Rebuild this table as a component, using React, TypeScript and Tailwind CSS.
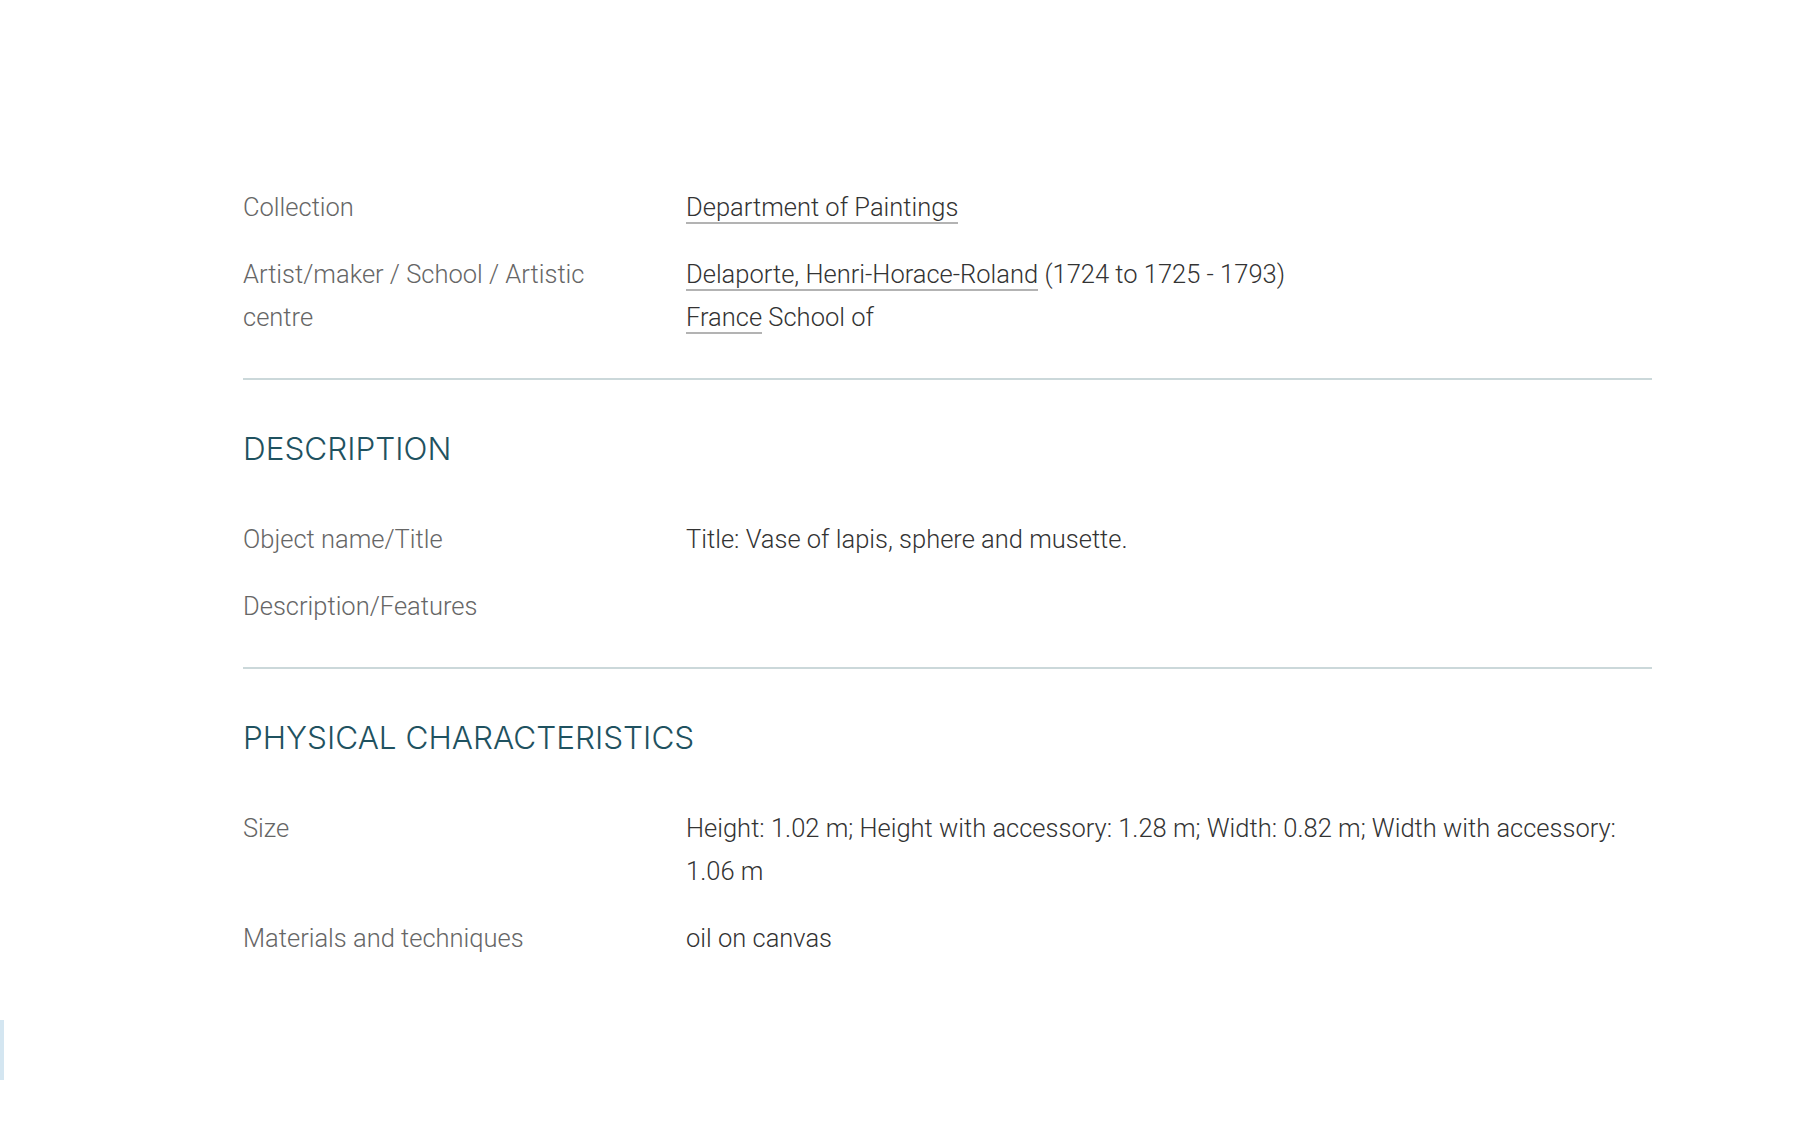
import React from "react";

type Row = { label: string; value: React.ReactNode };

function Link({ children }: { children: React.ReactNode }) {
  return <span className="border-b-2 border-[#b3b3b3]">{children}</span>;
}

function Field({ label, value }: Row) {
  return (
    <div className="flex">
      <div className="w-[443px] shrink-0 pr-[70px] text-[#666666]">{label}</div>
      <div className="flex-1 text-[#333333]">{value}</div>
    </div>
  );
}

function Section({ title, rows, last }: { title?: string; rows: Row[]; last?: boolean }) {
  return (
    <section className={last ? "" : "border-b-2 border-[#cbd8da] pb-[39px]"}>
      {title && (
        <h2 className="mt-[49px] mb-[49px] font-['Inter',sans-serif] text-[31.5px] leading-[40px] font-light text-[#1f5260] uppercase">
          {title}
        </h2>
      )}
      <div className="flex flex-col gap-[24px]">
        {rows.map((r) => (
          <Field key={r.label} label={r.label} value={r.value} />
        ))}
      </div>
    </section>
  );
}

export default function App() {
  return (
    <div className="relative min-h-[1129px] bg-white font-['Roboto',sans-serif] font-light text-[25.5px] leading-[43px]">
      <div className="w-[1409px] ml-[243px] pt-[186px]">
        <Section
          rows={[
            { label: "Collection", value: <Link>Department of Paintings</Link> },
            {
              label: "Artist/maker / School / Artistic centre",
              value: (
                <>
                  <div>
                    <Link>Delaporte, Henri-Horace-Roland</Link> (1724 to 1725 - 1793)
                  </div>
                  <div>
                    <Link>France</Link> School of
                  </div>
                </>
              ),
            },
          ]}
        />
        <Section
          title="Description"
          rows={[
            { label: "Object name/Title", value: "Title: Vase of lapis, sphere and musette." },
            { label: "Description/Features", value: "" },
          ]}
        />
        <Section
          title="Physical characteristics"
          last
          rows={[
            {
              label: "Size",
              value: "Height: 1.02 m; Height with accessory: 1.28 m; Width: 0.82 m; Width with accessory: 1.06 m",
            },
            { label: "Materials and techniques", value: "oil on canvas" },
          ]}
        />
      </div>

      {/* feedback tab stub at left edge */}
      <div className="absolute left-0 top-[1020px] h-[60px] w-[4px] bg-[#d4e6f1]" />
    </div>
  );
}
